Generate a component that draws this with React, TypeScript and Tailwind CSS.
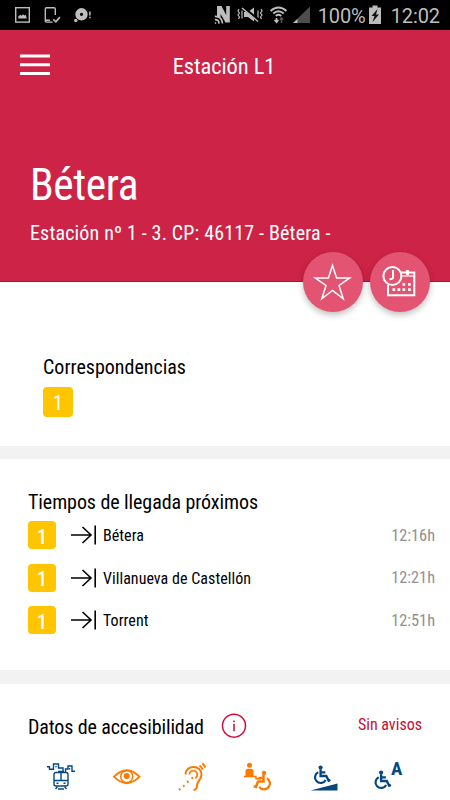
import React from 'react';

const llegadas = [
  { linea: '1', destino: 'Bétera', hora: '12:16h' },
  { linea: '1', destino: 'Villanueva de Castellón', hora: '12:21h' },
  { linea: '1', destino: 'Torrent', hora: '12:51h' },
];

function StatusBar() {
  return (
    <div className="h-[30px] bg-black flex items-center justify-between text-[#bdbdbd]">
      <svg width="95" height="30" viewBox="0 0 95 30" fill="none" stroke="currentColor" strokeWidth="1.4">
        <rect x="15.7" y="7.7" width="13.6" height="14.4" />
        <path d="M18.3 18.5v-2l2-1.8 1.4 1 1.3-1.5 1.4 1.2 1.4-.6 1 3.7z" fill="currentColor" stroke="none" />
        <path d="M55.3 15V9q0-1.3-1.3-1.3h-7.4q-1.3 0-1.3 1.3v12q0 1.1 1.3 1.1h6M46 20.3h4" />
        <path d="M53.3 19.3l2.6 2.5 4-4.7" strokeWidth="1.7" />
        <circle cx="81.5" cy="14.3" r="3.9" strokeWidth="4.6" />
        <circle cx="75.8" cy="20.5" r="1.7" fill="currentColor" stroke="none" />
        <path d="M89.9 11.5v4M89.9 16.7v1.6" strokeWidth="1.5" />
      </svg>
      <div className="flex items-center pr-[10px]">
        <svg width="103" height="30" viewBox="213 0 103 30" fill="none" stroke="currentColor">
          <path d="M217 6h4.5l4.7 9V6h3.6v16.5h-4.3L220.600 14v3H217z" fill="currentColor" stroke="none" />
          <path d="M214.8 16.3q7-.3 7.700 7.200M214.800 19.600q4-.3 4.300 4M214.800 23h1.400" strokeWidth="1.7" />
          <path d="M239 9l-1 2 1.5 2-1.5 2 1.5 2-1 2M242 10.500v8M261 9l1 2-1.500 2 1.500 2-1.500 2 1 2M258 10.500v8" strokeWidth="1.2" />
          <path d="M244 12h4l6-4.500v14l-6-4.500h-4z" fill="currentColor" stroke="none" />
          <path d="M243 7.500l16 13" stroke="#000" strokeWidth="3" />
          <path d="M242 8l16 13.500" strokeWidth="1.5" />
          <path d="M270.500 11q8-7 16 0M273.200 13.500q5.300-4.500 10.600 0M275.800 16q2.700-2.300 5.400 0" strokeWidth="1.9" />
          <path d="M276.500 18v4M274.600 20l1.900 2.200 1.900-2.200" strokeWidth="1.7" />
          <path d="M281.500 23v-5M279.800 19.800l1.700-2 1.700 2" stroke="#555" strokeWidth="1.5" />
          <path d="M310 6.500V23h-17z" fill="#4d4d4d" stroke="none" />
          <path d="M297.500 19v4H293z" fill="currentColor" stroke="none" />
        </svg>
        <span className="ml-[2px] w-[48px] pt-[2px] text-[20px] leading-[28px] tracking-[-0.1px]">100%</span>
        <svg className="ml-[2px]" width="14" height="30" viewBox="0 0 14 30">
          <path d="M4.500 5.500h5v2H13V24H1V7.500h3.500z" fill="currentColor" />
          <path d="M9.500 9L3.500 16h3l-2 6 6.500-7.500H8z" fill="#111" />
        </svg>
        <span className="ml-[9px] pt-[2px] text-[20px] leading-[28px] tracking-[-0.1px]">12:02</span>
      </div>
    </div>
  );
}

function Flecha() {
  return (
    <svg width="26" height="22" viewBox="0 0 26 22" fill="none" stroke="#000" strokeWidth="1.6">
      <path d="M0 11h20M11.500 3l8.500 8-8.500 8M24.200 1.500v19" />
    </svg>
  );
}

function Persona() {
  return (
    <>
      <circle cx="8" cy="2.2" r="2.2" fill="currentColor" stroke="none" />
      <path d="M8 4v7h6l2.500 5 1.800-.8M8 7.300h5" strokeWidth="2.5" />
      <path d="M5.500 7.200a5.900 5.900 0 1 0 7.800 8" strokeWidth="2.3" />
    </>
  );
}

export default function App() {
  return (
    <div className="w-[450px] h-[800px] overflow-hidden bg-white text-black font-[Roboto,sans-serif]">
      <StatusBar />
      <div className="[font-stretch:75%]">
        <header className="relative h-[252px] bg-[#cc2346] border-b border-[#c00d35] text-white">
          <div className="relative flex h-[72px] items-center justify-center">
            <svg className="absolute left-5 top-[24px]" width="30" height="22" viewBox="0 0 30 22" fill="#fff">
              <path d="M0 .6h30v3H0zM0 9.300h30v3H0zM0 18h30v3H0z" />
            </svg>
            <h1 className="pr-[2px] text-[22.5px] leading-[28px] tracking-[-0.1px]">Estación L1</h1>
          </div>
          <h2 className="ml-[30px] mt-[58px] text-[43.5px] leading-[52px] tracking-[-0.4px]">Bétera</h2>
          <p className="ml-[30px] mt-[8px] text-[20px] leading-[26px] tracking-[0.16px]">Estación nº 1 - 3. CP: 46117 - Bétera -</p>
          <div className="absolute right-5 top-[222px] flex gap-[7px]">
            <button className="flex size-[60px] items-center justify-center rounded-full bg-[#e35472] shadow-[0_3px_6px_rgba(0,0,0,0.25)]">
              <svg width="60" height="60" viewBox="0 0 60 60" fill="none" stroke="#fff" strokeWidth="1.5">
                <path d="M29.500 13.500l4.100 12.400h13.200L36 33.500l4.200 13.300-10.700-8.300-10.700 8.300L23 33.500l-10.800-7.600h13.200z" />
              </svg>
            </button>
            <button className="flex size-[60px] items-center justify-center rounded-full bg-[#e35472] shadow-[0_3px_6px_rgba(0,0,0,0.25)]">
              <svg width="60" height="60" viewBox="0 0 60 60" fill="none" stroke="#fff" strokeWidth="2">
                <path d="M31 20.500h13.300v22.800H18V33" />
                <path d="M37.500 18v5" strokeWidth="2.8" />
                <path d="M31 24h13" strokeWidth="1.2" />
                <circle cx="22.4" cy="24" r="9" />
                <path d="M23 18v7.500q0 1.800-3.500 1.800" />
                <path d="M32.500 32.400h2.700M38 32.400h2.700M22.500 37.600h2.700M27.500 37.600h2.700M32.500 37.600h2.700M38 37.600h2.700" strokeWidth="2.6" />
              </svg>
            </button>
          </div>
        </header>

        <section className="h-[164px] pl-[43px] pt-[72px]">
          <h3 className="text-[20px] leading-[26px]">Correspondencias</h3>
          <div className="mt-[7px] flex size-[30px] items-center justify-center rounded-[4px] bg-[#ffc500] pt-[2px] text-[20px] text-white">1</div>
        </section>

        <section className="h-[224px] border-t-[13px] border-[#f2f2f2] pl-[28px] pr-[15px] pt-[30px]">
          <h3 className="text-[20px] leading-[26px] tracking-[-0.08px]">Tiempos de llegada próximos</h3>
          <div className="mt-[6px] flex flex-col gap-[14.5px]">
            {llegadas.map((l) => (
              <div key={l.destino} className="flex h-[28px] items-center">
                <span className="flex size-[28px] items-center justify-center rounded-[4px] bg-[#ffc500] pt-[3px] text-[20px] font-medium text-white">{l.linea}</span>
                <div className="ml-[15px]"><Flecha /></div>
                <span className="ml-[6px] pt-[2px] text-[16px] tracking-[0.04px]">{l.destino}</span>
                <span className="ml-auto pt-[2px] text-[16.3px] text-[#909090]">{l.hora}</span>
              </div>
            ))}
          </div>
        </section>

        <section className="border-t-[14px] border-[#f2f2f2] pt-[28px]">
          <div className="flex h-[28px] items-center px-[28px]">
            <h3 className="w-[176px] whitespace-nowrap pt-[2px] text-[20px] leading-[26px] tracking-[-0.12px]">Datos de accesibilidad</h3>
            <svg className="ml-[17px]" width="26" height="26" viewBox="0 0 26 26" fill="none" stroke="#cc0d35" strokeWidth="1.5">
              <circle cx="13" cy="12.7" r="11.5" />
              <path d="M13 10.800v7.500M13 7.500v1.700" />
            </svg>
            <span className="ml-auto -mt-[3px] text-[16px] leading-[20px] text-[#c80d33]">Sin avisos</span>
          </div>
          <div className="mt-[20px] flex h-[34px] items-center gap-[36px] pl-[46px] text-[#ff7900]">
            <svg width="30" height="30" viewBox="46 761 30 30" fill="none" stroke="#064780" strokeWidth="1.4">
              <path d="M47 765.700h2.500v2.600h4V763h5v4H63v3M65.500 771.500v-3.500h2.500v-3h4v5.300h3" />
              <path d="M56 765v1.300M69.500 767v1.500M58 770.500h6" />
              <rect x="54" y="771.5" width="14" height="13.5" rx="2" />
              <path d="M54 779.500h14M61 772v7.500M55.500 788l2-2.500M66.500 788l-2-2.500M58 788h6M56.500 782.300h2M63.500 782.300h2" />
            </svg>
            <svg width="30" height="30" viewBox="112 761 30 30" fill="none" stroke="currentColor" strokeWidth="1.9">
              <path d="M114 775.700q12.700-13 25.500 0-12.800 13-25.500 0z" />
              <circle cx="126.7" cy="775.5" r="6" strokeWidth="1.5" />
              <circle cx="126.7" cy="775" r="3" fill="currentColor" stroke="none" />
            </svg>
            <svg width="30" height="30" viewBox="178 761 30 30" fill="none" stroke="currentColor" strokeWidth="2">
              <path d="M185.500 773.500c0-4.500 3.500-7.500 8-7.500s8 3 8 7.500c0 5.500-4.300 6-4.500 11-.1 3.200-1.500 4.500-3.500 4.500" />
              <path d="M189.500 773.500c0-5 7.500-5 7.700 0 .1 1.700-.7 2.800-1.700 4" strokeWidth="1.7" />
              <path d="M199.500 764.500q2 1.500 3.200 4M202.300 762.300q2 1.700 3 4.300" strokeWidth="2" />
              <path d="M179 789l1.500-1.200M183 785.500l1.500-1.200M187 781.300l1.500-1.200M191.500 777.500l1.500-1.200" strokeWidth="2.2" />
            </svg>
            <svg width="30" height="30" viewBox="244 761 30 30" fill="none" stroke="currentColor">
              <circle cx="249.5" cy="764.3" r="2.5" fill="currentColor" stroke="none" />
              <path d="M245.500 775.500v-5q0-2.700 2.700-2.700h2.600q2.700 0 2.700 2.700v5z" fill="currentColor" stroke="none" />
              <path d="M244 775.500h12v2.300h5" strokeWidth="1.5" />
              <circle cx="264" cy="772" r="2.2" fill="currentColor" stroke="none" />
              <path d="M263.500 774v6.500h-5.500l-2 5.500-2.200-.8M263.500 777h-5" strokeWidth="2.5" />
              <path d="M267 777.300a5.900 5.900 0 1 1-7.800 8.500" strokeWidth="2.3" />
            </svg>
            <svg className="text-[#064780]" width="30" height="30" viewBox="310 761 30 30" fill="none" stroke="currentColor">
              <g transform="translate(313 764.500) scale(.95)"><Persona /></g>
              <path d="M310.500 789.500l27-7v7z" fill="currentColor" stroke="none" />
            </svg>
            <div className="-ml-[3px] flex text-[#064780]">
              <svg width="19" height="30" viewBox="372.5 761 19 30" fill="none" stroke="currentColor">
                <g transform="translate(373 769.500) scale(.95)"><Persona /></g>
              </svg>
              <span className="-mt-[3px] -ml-px text-[19px] font-bold leading-[20px] [font-stretch:80%]">A</span>
            </div>
          </div>
        </section>
      </div>
    </div>
  );
}
